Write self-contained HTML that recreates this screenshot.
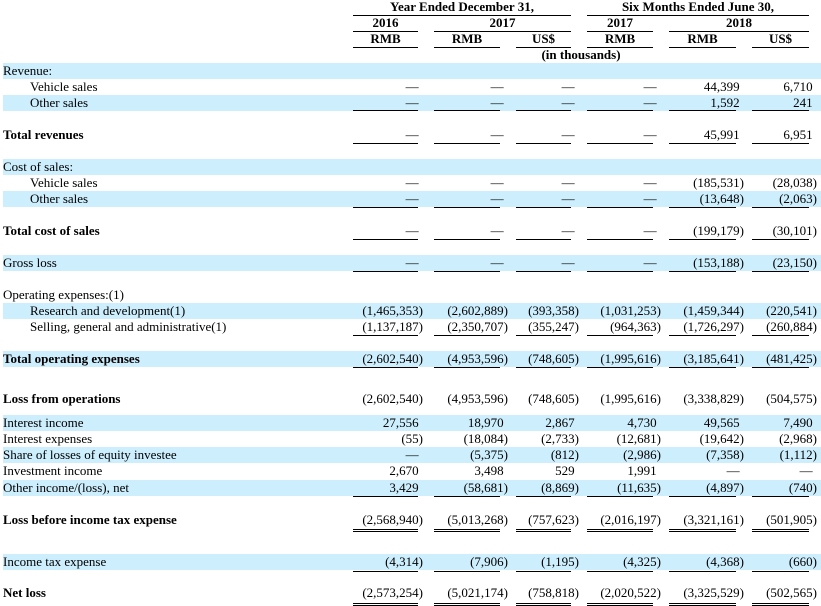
<!DOCTYPE html>
<html><head><meta charset="utf-8"><style>
*{margin:0;padding:0;box-sizing:border-box}
body{width:821px;height:606px;background:#fff;position:relative;overflow:hidden;font-family:"Liberation Serif",serif;font-size:13px;color:#000}
.h{position:absolute;font-weight:bold;text-align:center;line-height:14px;white-space:nowrap}
.l{position:absolute;height:1px;background:#000}
.r{position:absolute;left:3px;width:818px;height:16px;line-height:16px;white-space:nowrap}
.b{background:#cdeefd}
.t{position:absolute;left:0}
.i{left:27px}
.bo{font-weight:bold}
.c{position:absolute;text-align:right;top:0}
.c1{left:350px;width:70px}.c2{left:431px;width:74px}.c3{left:513px;width:63px}
.c4{left:584px;width:74px}.c5{left:666px;width:75px}.c6{left:749px;width:65px}
.u{position:absolute;height:1px;background:#000}
.u1{left:350px;width:65px}.u2{left:431px;width:66px}.u3{left:513px;width:55px}
.u4{left:584px;width:66px}.u5{left:666px;width:67px}.u6{left:749px;width:57px}
.x{visibility:hidden}
</style></head><body>
<div class="h" style="left:353px;width:218px;top:0">Year Ended December 31,</div>
<div class="h" style="left:587px;width:222px;top:0">Six Months Ended June 30,</div>
<div class="l" style="left:353px;width:218px;top:15px"></div>
<div class="l" style="left:587px;width:222px;top:15px"></div>
<div class="h" style="left:353px;width:65px;top:16px">2016</div>
<div class="h" style="left:434px;width:137px;top:16px">2017</div>
<div class="h" style="left:587px;width:66px;top:16px">2017</div>
<div class="h" style="left:669px;width:140px;top:16px">2018</div>
<div class="l" style="left:353px;width:65px;top:31px"></div>
<div class="l" style="left:434px;width:137px;top:31px"></div>
<div class="l" style="left:587px;width:66px;top:31px"></div>
<div class="l" style="left:669px;width:140px;top:31px"></div>
<div class="h" style="left:353px;width:65px;top:32px">RMB</div>
<div class="h" style="left:434px;width:66px;top:32px">RMB</div>
<div class="h" style="left:516px;width:55px;top:32px">US$</div>
<div class="h" style="left:587px;width:66px;top:32px">RMB</div>
<div class="h" style="left:669px;width:67px;top:32px">RMB</div>
<div class="h" style="left:752px;width:57px;top:32px">US$</div>
<div class="l" style="left:353px;width:65px;top:47px"></div>
<div class="l" style="left:434px;width:66px;top:47px"></div>
<div class="l" style="left:516px;width:55px;top:47px"></div>
<div class="l" style="left:587px;width:66px;top:47px"></div>
<div class="l" style="left:669px;width:67px;top:47px"></div>
<div class="l" style="left:752px;width:57px;top:47px"></div>
<div class="h" style="left:481px;width:200px;top:48px">(in thousands)</div>

<div class="r b" style="top:63px"><span class="t">Revenue:</span></div>
<div class="r" style="top:79px"><span class="t i">Vehicle sales</span>
<div class="c c1">—<span class="x">)</span></div><div class="c c2">—<span class="x">)</span></div><div class="c c3">—<span class="x">)</span></div><div class="c c4">—<span class="x">)</span></div><div class="c c5">44,399<span class="x">)</span></div><div class="c c6">6,710<span class="x">)</span></div></div>
<div class="r b" style="top:95px"><span class="t i">Other sales</span>
<div class="c c1">—<span class="x">)</span></div><div class="c c2">—<span class="x">)</span></div><div class="c c3">—<span class="x">)</span></div><div class="c c4">—<span class="x">)</span></div><div class="c c5">1,592<span class="x">)</span></div><div class="c c6">241<span class="x">)</span></div>
<div class="u u1" style="top:15px"></div><div class="u u2" style="top:15px"></div><div class="u u3" style="top:15px"></div><div class="u u4" style="top:15px"></div><div class="u u5" style="top:15px"></div><div class="u u6" style="top:15px"></div></div>
<div class="r" style="top:127px"><span class="t bo">Total revenues</span>
<div class="c c1">—<span class="x">)</span></div><div class="c c2">—<span class="x">)</span></div><div class="c c3">—<span class="x">)</span></div><div class="c c4">—<span class="x">)</span></div><div class="c c5">45,991<span class="x">)</span></div><div class="c c6">6,951<span class="x">)</span></div>
<div class="u u1" style="top:16px"></div><div class="u u2" style="top:16px"></div><div class="u u3" style="top:16px"></div><div class="u u4" style="top:16px"></div><div class="u u5" style="top:16px"></div><div class="u u6" style="top:16px"></div></div>

<div class="r b" style="top:159px"><span class="t">Cost of sales:</span></div>
<div class="r" style="top:175px"><span class="t i">Vehicle sales</span>
<div class="c c1">—<span class="x">)</span></div><div class="c c2">—<span class="x">)</span></div><div class="c c3">—<span class="x">)</span></div><div class="c c4">—<span class="x">)</span></div><div class="c c5">(185,531)</div><div class="c c6">(28,038)</div></div>
<div class="r b" style="top:191px"><span class="t i">Other sales</span>
<div class="c c1">—<span class="x">)</span></div><div class="c c2">—<span class="x">)</span></div><div class="c c3">—<span class="x">)</span></div><div class="c c4">—<span class="x">)</span></div><div class="c c5">(13,648)</div><div class="c c6">(2,063)</div>
<div class="u u1" style="top:16px"></div><div class="u u2" style="top:16px"></div><div class="u u3" style="top:16px"></div><div class="u u4" style="top:16px"></div><div class="u u5" style="top:16px"></div><div class="u u6" style="top:16px"></div></div>
<div class="r" style="top:223px"><span class="t bo">Total cost of sales</span>
<div class="c c1">—<span class="x">)</span></div><div class="c c2">—<span class="x">)</span></div><div class="c c3">—<span class="x">)</span></div><div class="c c4">—<span class="x">)</span></div><div class="c c5">(199,179)</div><div class="c c6">(30,101)</div>
<div class="u u1" style="top:16px"></div><div class="u u2" style="top:16px"></div><div class="u u3" style="top:16px"></div><div class="u u4" style="top:16px"></div><div class="u u5" style="top:16px"></div><div class="u u6" style="top:16px"></div></div>
<div class="r b" style="top:255px"><span class="t">Gross loss</span>
<div class="c c1">—<span class="x">)</span></div><div class="c c2">—<span class="x">)</span></div><div class="c c3">—<span class="x">)</span></div><div class="c c4">—<span class="x">)</span></div><div class="c c5">(153,188)</div><div class="c c6">(23,150)</div>
<div class="u u1" style="top:16px"></div><div class="u u2" style="top:16px"></div><div class="u u3" style="top:16px"></div><div class="u u4" style="top:16px"></div><div class="u u5" style="top:16px"></div><div class="u u6" style="top:16px"></div></div>

<div class="r" style="top:287px"><span class="t">Operating expenses:(1)</span></div>
<div class="r b" style="top:303px"><span class="t i">Research and development(1)</span>
<div class="c c1">(1,465,353)</div><div class="c c2">(2,602,889)</div><div class="c c3">(393,358)</div><div class="c c4">(1,031,253)</div><div class="c c5">(1,459,344)</div><div class="c c6">(220,541)</div></div>
<div class="r" style="top:319px"><span class="t i">Selling, general and administrative(1)</span>
<div class="c c1">(1,137,187)</div><div class="c c2">(2,350,707)</div><div class="c c3">(355,247)</div><div class="c c4">(964,363)</div><div class="c c5">(1,726,297)</div><div class="c c6">(260,884)</div>
<div class="u u1" style="top:16px"></div><div class="u u2" style="top:16px"></div><div class="u u3" style="top:16px"></div><div class="u u4" style="top:16px"></div><div class="u u5" style="top:16px"></div><div class="u u6" style="top:16px"></div></div>
<div class="r b" style="top:351px"><span class="t bo">Total operating expenses</span>
<div class="c c1">(2,602,540)</div><div class="c c2">(4,953,596)</div><div class="c c3">(748,605)</div><div class="c c4">(1,995,616)</div><div class="c c5">(3,185,641)</div><div class="c c6">(481,425)</div>
<div class="u u1" style="top:16px"></div><div class="u u2" style="top:16px"></div><div class="u u3" style="top:16px"></div><div class="u u4" style="top:16px"></div><div class="u u5" style="top:16px"></div><div class="u u6" style="top:16px"></div></div>

<div class="r" style="top:391px"><span class="t bo">Loss from operations</span>
<div class="c c1">(2,602,540)</div><div class="c c2">(4,953,596)</div><div class="c c3">(748,605)</div><div class="c c4">(1,995,616)</div><div class="c c5">(3,338,829)</div><div class="c c6">(504,575)</div></div>
<div class="r b" style="top:415px"><span class="t">Interest income</span>
<div class="c c1">27,556<span class="x">)</span></div><div class="c c2">18,970<span class="x">)</span></div><div class="c c3">2,867<span class="x">)</span></div><div class="c c4">4,730<span class="x">)</span></div><div class="c c5">49,565<span class="x">)</span></div><div class="c c6">7,490<span class="x">)</span></div></div>
<div class="r" style="top:431px"><span class="t">Interest expenses</span>
<div class="c c1">(55)</div><div class="c c2">(18,084)</div><div class="c c3">(2,733)</div><div class="c c4">(12,681)</div><div class="c c5">(19,642)</div><div class="c c6">(2,968)</div></div>
<div class="r b" style="top:447px"><span class="t">Share of losses of equity investee</span>
<div class="c c1">—<span class="x">)</span></div><div class="c c2">(5,375)</div><div class="c c3">(812)</div><div class="c c4">(2,986)</div><div class="c c5">(7,358)</div><div class="c c6">(1,112)</div></div>
<div class="r" style="top:463px"><span class="t">Investment income</span>
<div class="c c1">2,670<span class="x">)</span></div><div class="c c2">3,498<span class="x">)</span></div><div class="c c3">529<span class="x">)</span></div><div class="c c4">1,991<span class="x">)</span></div><div class="c c5">—<span class="x">)</span></div><div class="c c6">—<span class="x">)</span></div></div>
<div class="r b" style="top:480px"><span class="t">Other income/(loss), net</span>
<div class="c c1">3,429<span class="x">)</span></div><div class="c c2">(58,681)</div><div class="c c3">(8,869)</div><div class="c c4">(11,635)</div><div class="c c5">(4,897)</div><div class="c c6">(740)</div>
<div class="u u1" style="top:16px"></div><div class="u u2" style="top:16px"></div><div class="u u3" style="top:16px"></div><div class="u u4" style="top:16px"></div><div class="u u5" style="top:16px"></div><div class="u u6" style="top:16px"></div></div>

<div class="r" style="top:512px"><span class="t bo">Loss before income tax expense</span>
<div class="c c1">(2,568,940)</div><div class="c c2">(5,013,268)</div><div class="c c3">(757,623)</div><div class="c c4">(2,016,197)</div><div class="c c5">(3,321,161)</div><div class="c c6">(501,905)</div>
<div class="u u1" style="top:17px"></div><div class="u u2" style="top:17px"></div><div class="u u3" style="top:17px"></div><div class="u u4" style="top:17px"></div><div class="u u5" style="top:17px"></div><div class="u u6" style="top:17px"></div>
<div class="u u1" style="top:19px"></div><div class="u u2" style="top:19px"></div><div class="u u3" style="top:19px"></div><div class="u u4" style="top:19px"></div><div class="u u5" style="top:19px"></div><div class="u u6" style="top:19px"></div></div>

<div class="r b" style="top:554px"><span class="t">Income tax expense</span>
<div class="c c1">(4,314)</div><div class="c c2">(7,906)</div><div class="c c3">(1,195)</div><div class="c c4">(4,325)</div><div class="c c5">(4,368)</div><div class="c c6">(660)</div>
<div class="u u1" style="top:17px"></div><div class="u u2" style="top:17px"></div><div class="u u3" style="top:17px"></div><div class="u u4" style="top:17px"></div><div class="u u5" style="top:17px"></div><div class="u u6" style="top:17px"></div></div>
<div class="r" style="top:585px"><span class="t bo">Net loss</span>
<div class="c c1">(2,573,254)</div><div class="c c2">(5,021,174)</div><div class="c c3">(758,818)</div><div class="c c4">(2,020,522)</div><div class="c c5">(3,325,529)</div><div class="c c6">(502,565)</div>
<div class="u u1" style="top:18px"></div><div class="u u2" style="top:18px"></div><div class="u u3" style="top:18px"></div><div class="u u4" style="top:18px"></div><div class="u u5" style="top:18px"></div><div class="u u6" style="top:18px"></div>
<div class="u u1" style="top:20px"></div><div class="u u2" style="top:20px"></div><div class="u u3" style="top:20px"></div><div class="u u4" style="top:20px"></div><div class="u u5" style="top:20px"></div><div class="u u6" style="top:20px"></div></div>
</body></html>
